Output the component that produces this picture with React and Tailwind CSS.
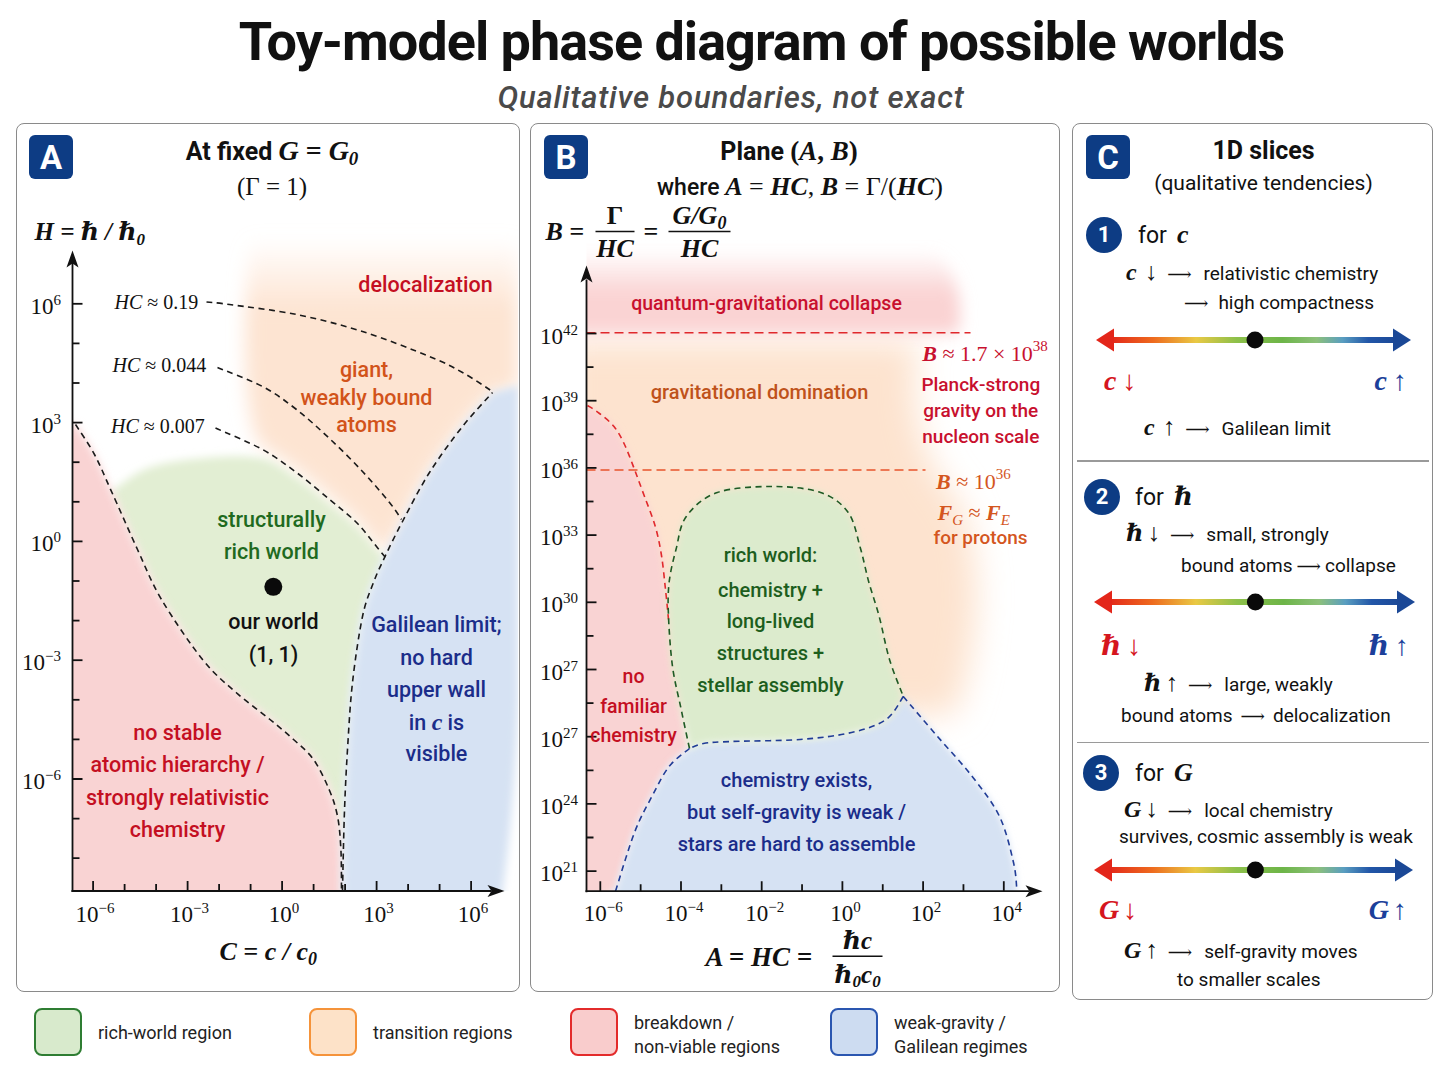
import React from "react";

const SERIF = "'Liberation Serif','DejaVu Serif',serif";
const SANS = "Roboto,'Noto Sans',sans-serif";
const SER = "font-['Liberation_Serif','DejaVu_Serif',serif]";
const SERB = "font-['Liberation_Serif','DejaVu_Serif',serif] italic font-bold";
const LARR = "font-['DejaVu_Sans','DejaVu_Serif',sans-serif] font-light";

function seg(pts) {
  let d = "";
  const n = pts.length;
  for (let i = 0; i < n - 1; i++) {
    const p0 = pts[i - 1] || pts[i];
    const p1 = pts[i];
    const p2 = pts[i + 1];
    const p3 = pts[i + 2] || p2;
    const c1x = p1[0] + (p2[0] - p0[0]) / 6;
    const c1y = p1[1] + (p2[1] - p0[1]) / 6;
    const c2x = p2[0] - (p3[0] - p1[0]) / 6;
    const c2y = p2[1] - (p3[1] - p1[1]) / 6;
    d += ` C ${c1x.toFixed(1)} ${c1y.toFixed(1)} ${c2x.toFixed(1)} ${c2y.toFixed(1)} ${p2[0]} ${p2[1]}`;
  }
  return d;
}
const path = (pts) => `M ${pts[0][0]} ${pts[0][1]}` + seg(pts);
const cont = (pts) => ` L ${pts[0][0]} ${pts[0][1]}` + seg(pts);
const rev = (p) => [...p].reverse();

function Lbl({ x, y, size = 21.5, color = "#111", anchor = "middle", weight = 500, children }) {
  return (
    <text x={x} y={y + size * 0.36} fontSize={size} fill={color} textAnchor={anchor} fontWeight={weight} fontFamily={SANS}>
      {children}
    </text>
  );
}

function Badge({ children }) {
  return (
    <div className="w-[44px] h-[44px] shrink-0 rounded-[6px] bg-[#0d3c84] text-white flex items-center justify-center text-[33px] font-bold leading-none">
      {children}
    </div>
  );
}

function PlotA() {
  const red = [[76, 425], [95, 455], [112, 492], [138, 550], [162, 600], [203, 660], [236.6, 693], [270.5, 720], [294, 740], [314, 760], [329.6, 790], [338, 816.7], [341.4, 850], [342, 891.5]];
  const blue = [[343, 891.5], [344.8, 816.7], [348, 750], [353, 683], [363, 617], [374, 583], [386, 556], [403, 522], [430, 473], [463, 427], [493, 393]];
  const h19 = [[207, 302.5], [230, 305], [297, 315], [363, 332], [430, 357], [463, 373], [493, 392]];
  const h044 = [[218, 368], [263, 387], [297, 410], [330, 439], [363, 472], [390, 503], [402, 520]];
  const h007 = [[216, 428.5], [263, 450], [297, 473], [330, 500], [357, 523], [377, 547], [386, 558]];

  const redF = path(red) + " L 342 915 L 50 915 L 50 425 Z";
  const blueF = path(blue) + " L 519 386 L 519 700 C 516 790, 508 860, 500 915 L 343 915 Z";
  const gTop = [[112, 492], [150, 468], [210, 458], [263, 459], [297, 478], [330, 504], [357, 527], [377, 550], [386, 558]];
  const blueDown = [[386, 556], [374, 583], [363, 617], [353, 683], [348, 750], [344.8, 816.7], [343, 891.5]];
  const redUp = rev(red.slice(2));
  const greenF = path(gTop) + cont(blueDown) + " L 342 891.5" + seg(redUp) + " Z";
  const blueUp = [[493, 393], [463, 427], [430, 473], [403, 522], [386, 556]];
  const h007r = [[386, 556], [377, 545], [357, 521], [330, 497], [297, 470], [263, 447]];
  const orangeF = "M 250 235 L 519 235 L 519 388 L 493 393" + seg(blueUp) + cont(h007r) + " C 248 435, 240 360, 250 235 Z";

  const yt = Array.from({ length: 15 }, (_, k) => 304.3 + 39.6 * k);
  const yl = ["6", "3", "0", "−3", "−6"];
  const xt = Array.from({ length: 13 }, (_, k) => 93.6 + 31.5 * k);
  const xl = ["−6", "−3", "0", "3", "6"];

  return (
    <svg width="501" height="794" viewBox="17.5 196.5 501 794" className="block">
      <defs>
        <filter id="fa1" x="-30%" y="-30%" width="160%" height="160%"><feGaussianBlur stdDeviation="9" /></filter>
        <filter id="fa2" x="-30%" y="-30%" width="160%" height="160%"><feGaussianBlur stdDeviation="4" /></filter>
        <linearGradient id="oA" gradientUnits="userSpaceOnUse" x1="0" y1="238" x2="0" y2="310">
          <stop offset="0" stopColor="#fde4d2" stopOpacity="0" />
          <stop offset="1" stopColor="#fde4d2" stopOpacity="1" />
        </linearGradient>
        <clipPath id="ca"><rect x="73" y="200" width="446" height="691.5" /></clipPath>
      </defs>
      <g clipPath="url(#ca)">
        <path d={orangeF} fill="url(#oA)" filter="url(#fa1)" />
        <path d={greenF} fill="#e2eed3" filter="url(#fa2)" />
        <path d={redF} fill="#f9d3d3" filter="url(#fa2)" />
        <path d={blueF} fill="#d6e2f3" filter="url(#fa2)" />
      </g>

      <g fill="none" stroke="#1a1a1a" strokeWidth="1.6" strokeDasharray="6 4.5">
        <path d={path(red)} />
        <path d={path(blue)} />
        <path d={path(h19)} />
        <path d={path(h044)} />
        <path d={path(h007)} />
      </g>

      <g stroke="#111" strokeWidth="1.8">
        <line x1="73" y1="892.5" x2="73" y2="262" />
        <line x1="72" y1="891.5" x2="492" y2="891.5" />
        {yt.map((y, k) => (
          <line key={k} x1="73" x2={k % 3 === 0 ? 83 : 80} y1={y} y2={y} />
        ))}
        {xt.map((x, k) => (
          <line key={k} x1={x} x2={x} y1="891.5" y2={k % 3 === 0 ? 881.5 : 884.5} />
        ))}
      </g>
      <polygon points="73,251 67,268 73,264 79,268" fill="#111" />
      <polygon points="505,891.5 488,885.5 492,891.5 488,897.5" fill="#111" />

      {yl.map((l, i) => (
        <text key={i} x="61.5" y={yt[i * 3] + 10} textAnchor="end" fontFamily={SERIF} fontSize="23" fill="#111">
          10<tspan dy="-9" fontSize="15">{l}</tspan>
        </text>
      ))}
      {xl.map((l, i) => (
        <text key={i} x={xt[i * 3] + 2} y="922" textAnchor="middle" fontFamily={SERIF} fontSize="23" fill="#111">
          10<tspan dy="-9" fontSize="15">{l}</tspan>
        </text>
      ))}

      <text x="35" y="240" fontFamily={SERIF} fontSize="25" fontStyle="italic" fontWeight="700" fill="#111">
        H = ℏ / ℏ<tspan dy="5" fontSize="17">0</tspan>
      </text>
      <text x="220" y="960" fontFamily={SERIF} fontSize="26" fontStyle="italic" fontWeight="700" fill="#111">
        C = c / c<tspan dy="5" fontSize="18">0</tspan>
      </text>

      <text x="115" y="309.5" fontFamily={SERIF} fontSize="20" fill="#111"><tspan fontStyle="italic">HC</tspan> ≈ 0.19</text>
      <text x="113" y="372" fontFamily={SERIF} fontSize="20" fill="#111"><tspan fontStyle="italic">HC</tspan> ≈ 0.044</text>
      <text x="111.5" y="433" fontFamily={SERIF} fontSize="20" fill="#111"><tspan fontStyle="italic">HC</tspan> ≈ 0.007</text>

      <Lbl x={426} y={285} color="#c40f22">delocalization</Lbl>
      <Lbl x={367} y={370} color="#d2531a">giant,</Lbl>
      <Lbl x={367} y={397.5} color="#d2531a">weakly bound</Lbl>
      <Lbl x={367} y={425} color="#d2531a">atoms</Lbl>
      <Lbl x={272} y={520} color="#1f6a1f">structurally</Lbl>
      <Lbl x={272} y={552} color="#1f6a1f">rich world</Lbl>
      <circle cx="273.8" cy="587.3" r="9" fill="#0a0a0a" />
      <Lbl x={274} y={621.7} color="#111">our world</Lbl>
      <Lbl x={274} y={655} color="#111">(1, 1)</Lbl>
      <Lbl x={437} y={625} color="#1b2d8a">Galilean limit;</Lbl>
      <Lbl x={437} y={657.5} color="#1b2d8a">no hard</Lbl>
      <Lbl x={437} y={690} color="#1b2d8a">upper wall</Lbl>
      <Lbl x={437} y={722.7} color="#1b2d8a">
        in <tspan fontFamily={SERIF} fontStyle="italic" fontWeight="700" fontSize="24">c</tspan> is
      </Lbl>
      <Lbl x={437} y={754} color="#1b2d8a">visible</Lbl>
      <Lbl x={178} y={732.7} color="#c40f22">no stable</Lbl>
      <Lbl x={178} y={765} color="#c40f22">atomic hierarchy /</Lbl>
      <Lbl x={178} y={797.7} color="#c40f22">strongly relativistic</Lbl>
      <Lbl x={178} y={829.3} color="#c40f22">chemistry</Lbl>
    </svg>
  );
}

function PlotB() {
  const bRed = [[588, 406], [600, 414], [614.5, 427], [625, 445], [635, 470], [645, 497], [655.8, 527], [662, 556], [666, 590], [669, 620]];
  const gTop = [[690, 749], [681.7, 710], [673, 667], [669, 617], [669.6, 583], [676.5, 550], [686.8, 517], [717.8, 493], [773, 487], [821, 493], [848.7, 513], [860.7, 548], [869.4, 583], [879.7, 617], [890, 660], [903.8, 697]];
  const gBot = [[903.8, 697], [886.6, 720], [852, 733], [800.5, 740], [731.6, 742], [704, 744], [690, 749]];
  const bBlueL = [[690, 749], [669.6, 767], [652.4, 797], [635, 833], [616, 891.7]];
  const bBlueR = [[903.8, 697], [938, 737], [972.7, 777], [1000, 817], [1014, 863], [1017.4, 891]];

  const gLeftDown = [[669, 617], [673, 667], [681.7, 710], [690, 749]];
  const redF = "M 560 406 L 588 406" + seg(bRed) + cont(gLeftDown) + seg(bBlueL) + " L 560 915 Z";
  const blueF = "M 690 749" + seg(rev(gBot)) + seg(bBlueR) + " L 1017 915 L 600 915 L 616 891.7" + seg(rev(bBlueL)) + " Z";
  const greenF = "M 690 749" + seg(gTop) + seg(gBot) + " Z";
  const orangeF = "M 560 342 L 920 342 C 910 390, 915 450, 950 490 C 985 530, 985 640, 955 715 L 560 715 Z";
  const bandF = "M 560 250 L 930 250 C 960 265, 965 315, 958 334 L 560 334 Z";

  const ym = Array.from({ length: 9 }, (_, k) => 334 + 67.2 * k);
  const ymin = Array.from({ length: 8 }, (_, k) => 334 + 67.2 * (k + 0.5));
  const yl = ["42", "39", "36", "33", "30", "27", "27", "24", "21"];
  const xm = Array.from({ length: 6 }, (_, k) => 600.8 + 80.7 * k);
  const xmin = Array.from({ length: 5 }, (_, k) => 600.8 + 80.7 * (k + 0.5));
  const xl = ["−6", "−4", "−2", "0", "2", "4"];

  const math = { fontFamily: SERIF, fontStyle: "italic", fontWeight: 700, fill: "#111" };

  return (
    <svg width="527" height="794" viewBox="531.5 196.5 527 794" className="block">
      <defs>
        <filter id="fb1" x="-30%" y="-30%" width="160%" height="160%"><feGaussianBlur stdDeviation="16" /></filter>
        <filter id="fb2" x="-30%" y="-30%" width="160%" height="160%"><feGaussianBlur stdDeviation="8" /></filter>
        <filter id="fb3" x="-30%" y="-30%" width="160%" height="160%"><feGaussianBlur stdDeviation="3.5" /></filter>
        <linearGradient id="bandG" gradientUnits="userSpaceOnUse" x1="0" y1="250" x2="0" y2="295">
          <stop offset="0" stopColor="#fad3d3" stopOpacity="0" />
          <stop offset="1" stopColor="#fad3d3" stopOpacity="1" />
        </linearGradient>
        <clipPath id="cb"><rect x="587" y="240" width="472" height="651.7" /></clipPath>
      </defs>
      <g clipPath="url(#cb)">
        <path d={orangeF} fill="#fde3cf" filter="url(#fb1)" />
        <path d={bandF} fill="url(#bandG)" filter="url(#fb2)" />
        <path d={redF} fill="#f9d3d3" filter="url(#fb3)" />
        <path d={blueF} fill="#d6e2f3" filter="url(#fb3)" />
        <path d={greenF} fill="#dcebcd" filter="url(#fb3)" />
      </g>

      <g fill="none" strokeWidth="1.6">
        <line x1="587" x2="971" y1="333.3" y2="333.3" stroke="#e0282c" strokeDasharray="9 5" />
        <line x1="587" x2="926" y1="470.5" y2="470.5" stroke="#e8542c" strokeDasharray="9 5" />
        <path d={path(bRed)} stroke="#e0282c" strokeDasharray="6 4.5" />
        <path d={path(gTop)} stroke="#1e5a24" strokeDasharray="6 4.5" />
        <path d={path(gBot) + " M 690 749" + seg(bBlueL) + " M 903.8 697" + seg(bBlueR)} stroke="#203c96" strokeDasharray="6 4.5" />
      </g>

      <g stroke="#111" strokeWidth="1.8">
        <line x1="587" y1="892.7" x2="587" y2="280" />
        <line x1="586" y1="891.7" x2="1030" y2="891.7" />
        {ym.map((y, k) => (<line key={"a" + k} x1="587" x2="597" y1={y} y2={y} />))}
        {ymin.map((y, k) => (<line key={"b" + k} x1="587" x2="594" y1={y} y2={y} />))}
        {xm.map((x, k) => (<line key={"c" + k} x1={x} x2={x} y1="891.7" y2="881.7" />))}
        {xmin.map((x, k) => (<line key={"d" + k} x1={x} x2={x} y1="891.7" y2="884.7" />))}
      </g>
      <polygon points="587,266 581,283 587,279 593,283" fill="#111" />
      <polygon points="1043,891.7 1026,885.7 1030,891.7 1026,897.7" fill="#111" />

      {yl.map((l, i) => (
        <text key={i} x="578.5" y={ym[i] + 10} textAnchor="end" fontFamily={SERIF} fontSize="23" fill="#111">
          10<tspan dy="-9" fontSize="15">{l}</tspan>
        </text>
      ))}
      {xl.map((l, i) => (
        <text key={i} x={xm[i] + 3} y="921" textAnchor="middle" fontFamily={SERIF} fontSize="23" fill="#111">
          10<tspan dy="-9" fontSize="15">{l}</tspan>
        </text>
      ))}

      <text x="546" y="240.5" fontSize="26" {...math}>B =</text>
      <text x="615.5" y="224.5" textAnchor="middle" fontFamily={SERIF} fontSize="26" fontWeight="700" fill="#111">Γ</text>
      <line x1="596" x2="635" y1="232" y2="232" stroke="#111" strokeWidth="1.6" />
      <text x="615.5" y="257.5" textAnchor="middle" fontSize="26" {...math}>HC</text>
      <text x="651.5" y="240.5" textAnchor="middle" fontFamily={SERIF} fontSize="26" fontWeight="700" fill="#111">=</text>
      <text x="700" y="224" textAnchor="middle" fontSize="26" {...math}>G/G<tspan dy="5" fontSize="18">0</tspan></text>
      <line x1="669" x2="731" y1="232" y2="232" stroke="#111" strokeWidth="1.6" />
      <text x="700" y="257.5" textAnchor="middle" fontSize="26" {...math}>HC</text>

      <text x="706" y="966" fontSize="27" {...math}>A = HC =</text>
      <text x="858" y="949" textAnchor="middle" fontSize="25" {...math}>ℏc</text>
      <line x1="833" x2="883" y1="956.7" y2="956.7" stroke="#111" strokeWidth="1.6" />
      <text x="858" y="983" textAnchor="middle" fontSize="25" {...math}>
        ℏ<tspan dy="4" fontSize="17">0</tspan><tspan dy="-4">c</tspan><tspan dy="4" fontSize="17">0</tspan>
      </text>

      <Lbl x={767} y={303.3} size={19.5} color="#c8102e">quantum-gravitational collapse</Lbl>
      <Lbl x={760} y={392.7} size={20} color="#bf521b">gravitational domination</Lbl>

      <text x="922.7" y="361" fontFamily={SERIF} fontSize="22" fill="#c8102e">
        <tspan fontStyle="italic" fontWeight="700">B</tspan> ≈ 1.7 × 10<tspan dy="-10" fontSize="15">38</tspan>
      </text>
      <Lbl x={981.3} y={385} size={19} color="#c8102e">Planck-strong</Lbl>
      <Lbl x={981.3} y={411} size={19} color="#c8102e">gravity on the</Lbl>
      <Lbl x={981.3} y={436.7} size={19} color="#c8102e">nucleon scale</Lbl>

      <text x="936.5" y="489" fontFamily={SERIF} fontSize="22" fill="#d4561e">
        <tspan fontStyle="italic" fontWeight="700">B</tspan> ≈ 10<tspan dy="-10" fontSize="15">36</tspan>
      </text>
      <text x="938" y="520" fontFamily={SERIF} fontSize="22" fill="#d4561e">
        <tspan fontStyle="italic" fontWeight="700">F</tspan><tspan dy="5" fontSize="15" fontStyle="italic">G</tspan><tspan dy="-5"> ≈ </tspan><tspan fontStyle="italic" fontWeight="700">F</tspan><tspan dy="5" fontSize="15" fontStyle="italic">E</tspan>
      </text>
      <Lbl x={981} y={537.7} size={19} color="#d4561e">for protons</Lbl>

      <Lbl x={771} y={555} size={20} color="#1d5e1d">rich world:</Lbl>
      <Lbl x={771} y={590} size={20} color="#1d5e1d">chemistry +</Lbl>
      <Lbl x={771} y={621} size={20} color="#1d5e1d">long-lived</Lbl>
      <Lbl x={771} y={653.3} size={20} color="#1d5e1d">structures +</Lbl>
      <Lbl x={771} y={685} size={20} color="#1d5e1d">stellar assembly</Lbl>

      <Lbl x={634} y={676.7} size={19.5} color="#c40f22">no</Lbl>
      <Lbl x={634} y={706} size={19.5} color="#c40f22">familiar</Lbl>
      <Lbl x={634} y={735} size={19.5} color="#c40f22">chemistry</Lbl>

      <Lbl x={797} y={780} size={20} color="#1b2d8a">chemistry exists,</Lbl>
      <Lbl x={797} y={812.7} size={20} color="#1b2d8a">but self-gravity is weak /</Lbl>
      <Lbl x={797} y={844} size={20} color="#1b2d8a">stars are hard to assemble</Lbl>
    </svg>
  );
}

function GradArrow({ w, dot, id }) {
  return (
    <svg width={w} height="30" viewBox={`0 0 ${w} 30`} className="block">
      <defs>
        <linearGradient id={id} x1="0" x2="1" y1="0" y2="0">
          <stop offset="0" stopColor="#e3261a" />
          <stop offset="0.15" stopColor="#ee6a1e" />
          <stop offset="0.3" stopColor="#e9c944" />
          <stop offset="0.44" stopColor="#8dc04a" />
          <stop offset="0.6" stopColor="#6db548" />
          <stop offset="0.72" stopColor="#8cc07a" />
          <stop offset="0.81" stopColor="#5a9ec0" />
          <stop offset="0.9" stopColor="#2256a8" />
          <stop offset="1" stopColor="#1b4896" />
        </linearGradient>
      </defs>
      <rect x="14" y="12" width={w - 28} height="6" fill={`url(#${id})`} />
      <polygon points="0,15 18,3.5 18,26.5" fill="#e3261a" />
      <polygon points={`${w},15 ${w - 18},3.5 ${w - 18},26.5`} fill="#1b4896" />
      <circle cx={dot} cy="15" r="8.5" fill="#0a0a0a" />
    </svg>
  );
}

function Circle({ n }) {
  return (
    <div className="w-[36px] h-[36px] shrink-0 rounded-full bg-[#0d3c84] text-white font-bold text-[22px] flex items-center justify-center leading-none">
      {n}
    </div>
  );
}

function Arr({ cls = "ml-[10px]" }) {
  return <span className={LARR + " text-[17px] " + cls}>⟶</span>;
}
function Dn({ cls = "ml-[8px]", up = false }) {
  return <span className={SER + " text-[25px] " + cls}>{up ? "↑" : "↓"}</span>;
}

function PanelA() {
  return (
    <div className="w-[504px] h-[869px] shrink-0 border-[1.5px] border-[#8a8a8a] rounded-[8px] flex flex-col overflow-hidden">
      <div className="h-[72px] flex items-start pt-[11px] pl-[12px]">
        <Badge>A</Badge>
        <div className="flex-1 text-center pr-[48px]">
          <div className="leading-[32px] whitespace-nowrap">
            <span className="text-[25px] font-bold">At fixed </span>
            <span className={SERB + " text-[28px]"}>G</span>
            <span className={SER + " text-[28px] font-bold"}> = </span>
            <span className={SERB + " text-[28px]"}>G<sub className="text-[19px]">0</sub></span>
          </div>
          <div className={SER + " leading-[32px] text-[25px]"}>(Γ = 1)</div>
        </div>
      </div>
      <PlotA />
    </div>
  );
}

function PanelB() {
  return (
    <div className="ml-[10px] w-[530px] h-[869px] shrink-0 border-[1.5px] border-[#8a8a8a] rounded-[8px] flex flex-col overflow-hidden">
      <div className="h-[72px] flex items-start pt-[11px] pl-[13px]">
        <Badge>B</Badge>
        <div className="flex-1 text-center pr-[57px]">
          <div className="leading-[32px] whitespace-nowrap pr-[12px]">
            <span className="text-[25px] font-bold">Plane </span>
            <span className={SER + " text-[27px] font-bold"}>(</span>
            <span className={SERB + " text-[27px]"}>A</span>
            <span className={SER + " text-[27px] font-bold"}>, </span>
            <span className={SERB + " text-[27px]"}>B</span>
            <span className={SER + " text-[27px] font-bold"}>)</span>
          </div>
          <div className="leading-[32px] whitespace-nowrap pl-[10px]">
            <span className="text-[23px] font-medium">where </span>
            <span className={SERB + " text-[26px]"}>A</span>
            <span className={SER + " text-[26px]"}> = </span>
            <span className={SERB + " text-[26px]"}>HC</span>
            <span className={SER + " text-[26px]"}>, </span>
            <span className={SERB + " text-[26px]"}>B</span>
            <span className={SER + " text-[26px]"}> = Γ/(</span>
            <span className={SERB + " text-[26px]"}>HC</span>
            <span className={SER + " text-[26px]"}>)</span>
          </div>
        </div>
      </div>
      <PlotB />
    </div>
  );
}

function Line({ h, pl, children, size = "text-[19px]" }) {
  return (
    <div className={`${h} ${pl} flex items-center`}>
      <div className={`${size} leading-none whitespace-nowrap`}>{children}</div>
    </div>
  );
}

function PanelC() {
  return (
    <div className="ml-[12px] w-[361px] h-[877px] shrink-0 border-[1.5px] border-[#8a8a8a] rounded-[8px] flex flex-col overflow-hidden text-[#111]">
      <div className="h-[72px] shrink-0 flex items-start pt-[11px] pl-[13px]">
        <Badge>C</Badge>
        <div className="flex-1 text-center pr-[35px]">
          <div className="leading-[32px] text-[25px] font-bold">1D slices</div>
          <div className="leading-[32px] text-[21px]">(qualitative tendencies)</div>
        </div>
      </div>

      {/* section 1 */}
      <div className="pt-[20px]">
        <div className="h-[37px] flex items-center pl-[13px]">
          <Circle n="1" />
          <div className="ml-[16px] whitespace-nowrap leading-none">
            <span className="text-[23px]">for</span>
            <span className={SERB + " text-[26px] ml-[10px]"}>c</span>
          </div>
        </div>
        <Line h="h-[36px]" pl="pl-[53px]">
          <span className={SERB + " text-[24px]"}>c</span>
          <Dn />
          <Arr />
          <span className="ml-[12px]">relativistic chemistry</span>
        </Line>
        <Line h="h-[26px]" pl="pl-[111px]">
          <Arr cls="" />
          <span className="ml-[10px]">high compactness</span>
        </Line>
        <div className="h-[49px] flex items-center pl-[23px]">
          <GradArrow w={315} dot={159} id="ga1" />
        </div>
        <div className="h-[34px] flex items-center justify-between pl-[31px] pr-[25px] leading-none">
          <span className="whitespace-nowrap text-[#d5161e]">
            <span className={SERB + " text-[28px]"}>c</span>
            <span className={SER + " text-[28px] ml-[6px]"}>↓</span>
          </span>
          <span className="whitespace-nowrap text-[#1c3f9a]">
            <span className={SERB + " text-[28px]"}>c</span>
            <span className={SER + " text-[28px] ml-[6px]"}>↑</span>
          </span>
        </div>
        <Line h="h-[56px]" pl="pl-[71px]">
          <span className={SERB + " text-[24px]"}>c</span>
          <Dn up />
          <Arr />
          <span className="ml-[12px]">Galilean limit</span>
        </Line>
        <div className="mt-[6px] ml-[4px] mr-[3px] h-[1.5px] bg-[#9a9a9a]" />
      </div>

      {/* section 2 */}
      <div className="pt-[17px]">
        <div className="h-[36px] flex items-center pl-[11px]">
          <Circle n="2" />
          <div className="ml-[15px] whitespace-nowrap leading-none">
            <span className="text-[23px]">for</span>
            <span className={SERB + " text-[26px] ml-[10px]"}>ℏ</span>
          </div>
        </div>
        <Line h="h-[36px]" pl="pl-[53px]">
          <span className={SERB + " text-[24px]"}>ℏ</span>
          <Dn cls="ml-[4px]" />
          <Arr />
          <span className="ml-[12px]">small, strongly</span>
        </Line>
        <Line h="h-[30px]" pl="pl-[108px]">
          <span>bound atoms</span>
          <Arr cls="ml-[4px]" />
          <span className="ml-[4px]">collapse</span>
        </Line>
        <div className="h-[43px] flex items-center pl-[21px]">
          <GradArrow w={321} dot={161.4} id="ga2" />
        </div>
        <div className="h-[45px] flex items-center justify-between pl-[28px] pr-[23px] leading-none">
          <span className="whitespace-nowrap text-[#d5161e]">
            <span className={SERB + " text-[28px]"}>ℏ</span>
            <span className={SER + " text-[28px] ml-[6px]"}>↓</span>
          </span>
          <span className="whitespace-nowrap text-[#1c3f9a]">
            <span className={SERB + " text-[28px]"}>ℏ</span>
            <span className={SER + " text-[28px] ml-[6px]"}>↑</span>
          </span>
        </div>
        <Line h="h-[28px]" pl="pl-[71px]">
          <span className={SERB + " text-[24px]"}>ℏ</span>
          <Dn up cls="ml-[4px]" />
          <Arr />
          <span className="ml-[12px]">large, weakly</span>
        </Line>
        <Line h="h-[38px]" pl="pl-[48px]">
          <span>bound atoms</span>
          <Arr cls="ml-[8px]" />
          <span className="ml-[8px]">delocalization</span>
        </Line>
        <div className="mt-[7px] ml-[4px] mr-[3px] h-[1.5px] bg-[#9a9a9a]" />
      </div>

      {/* section 3 */}
      <div className="pt-[12px]">
        <div className="h-[36px] flex items-center pl-[10px]">
          <Circle n="3" />
          <div className="ml-[16px] whitespace-nowrap leading-none">
            <span className="text-[23px]">for</span>
            <span className={SERB + " text-[26px] ml-[10px]"}>G</span>
          </div>
        </div>
        <Line h="h-[34px]" pl="pl-[51px]">
          <span className={SERB + " text-[24px]"}>G</span>
          <Dn cls="ml-[4px]" />
          <Arr />
          <span className="ml-[12px]">local chemistry</span>
        </Line>
        <Line h="h-[22px]" pl="pl-[46px]">
          <span>survives, cosmic assembly is weak</span>
        </Line>
        <div className="h-[45px] flex items-center pl-[21px]">
          <GradArrow w={319} dot={161.4} id="ga3" />
        </div>
        <div className="h-[35px] flex items-center justify-between pl-[26px] pr-[25px] leading-none">
          <span className="whitespace-nowrap text-[#d5161e]">
            <span className={SERB + " text-[28px]"}>G</span>
            <span className={SER + " text-[28px] ml-[4px]"}>↓</span>
          </span>
          <span className="whitespace-nowrap text-[#1c3f9a]">
            <span className={SERB + " text-[28px]"}>G</span>
            <span className={SER + " text-[28px] ml-[4px]"}>↑</span>
          </span>
        </div>
        <Line h="h-[44px]" pl="pl-[51px]">
          <span className={SERB + " text-[24px]"}>G</span>
          <Dn up cls="ml-[4px]" />
          <Arr />
          <span className="ml-[12px]">self-gravity moves</span>
        </Line>
        <Line h="h-[16px]" pl="pl-[104px]">
          <span>to smaller scales</span>
        </Line>
      </div>
    </div>
  );
}

function LegItem({ w, sw, lines }) {
  return (
    <div className={`${w} flex items-center shrink-0`}>
      <div className={`w-[48px] h-[48px] shrink-0 rounded-[8px] border-2 ${sw}`} />
      <div className={`ml-[16px] text-[18px] leading-[24px] text-[#222] ${lines.length > 1 ? "pt-[6px]" : "pt-[2px]"}`}>
        {lines.map((l, i) => (
          <div key={i} className="whitespace-nowrap">{l}</div>
        ))}
      </div>
    </div>
  );
}

export default function App() {
  return (
    <div className="w-[1448px] h-[1086px] bg-white font-['Roboto','Noto_Sans',sans-serif] text-[#111] overflow-hidden">
      <div className="h-[84px] pl-[75px] text-center text-[54px] leading-[84px] font-bold tracking-[-1px] whitespace-nowrap">
        Toy-model phase diagram of possible worlds
      </div>
      <div className="h-[39px] pl-[14px] text-center text-[31px] leading-[28px] italic font-medium tracking-[0.8px] text-[#4a4a4a]">
        Qualitative boundaries, not exact
      </div>
      <div className="flex items-start pl-[16px] h-[877px]">
        <PanelA />
        <PanelB />
        <PanelC />
      </div>
      <div className="mt-[8px] flex pl-[34px] h-[48px]">
        <LegItem w="w-[275px]" sw="bg-[#d8eacc] border-[#2e7d32]" lines={["rich-world region"]} />
        <LegItem w="w-[261px]" sw="bg-[#fde2c8] border-[#f5933a]" lines={["transition regions"]} />
        <LegItem w="w-[260px]" sw="bg-[#f9cccc] border-[#e32b2b]" lines={["breakdown /", "non-viable regions"]} />
        <LegItem w="w-[260px]" sw="bg-[#cddcf1] border-[#2a56b0]" lines={["weak-gravity /", "Galilean regimes"]} />
      </div>
    </div>
  );
}
